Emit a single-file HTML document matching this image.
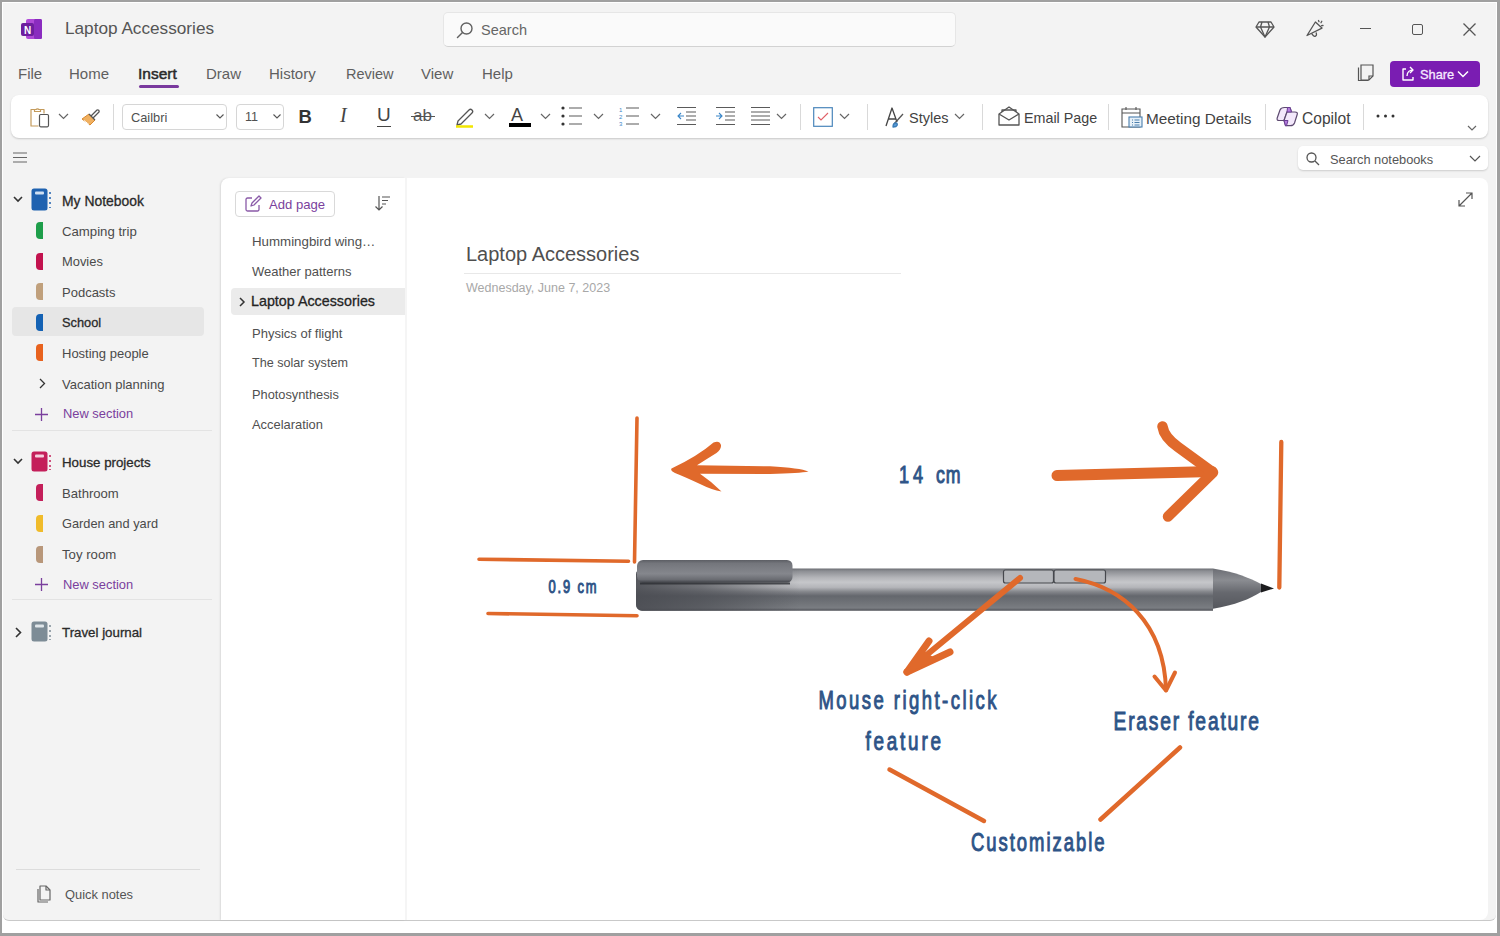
<!DOCTYPE html>
<html><head><meta charset="utf-8">
<style>
*{box-sizing:border-box;margin:0;padding:0}
html,body{width:1500px;height:936px;overflow:hidden;background:#fff}
body{position:relative;font-family:"Liberation Sans",sans-serif;color:#424242}
.a{position:absolute;white-space:nowrap}
#frame{position:absolute;left:0;top:0;width:1500px;height:936px;border-top:2px solid #a0a0a0;border-left:2px solid #a0a0a0;border-right:3px solid #a0a0a0;border-bottom:3px solid #a0a0a0;z-index:50;pointer-events:none}
#app{position:absolute;left:3px;top:3px;width:1493px;height:918px;background:#f3f3f3;border-bottom:1px solid #c9c9c9;border-radius:0 0 6px 6px}
.menu{font-size:15px;color:#5f5f5f;top:65px}
svg{position:absolute;overflow:visible}
.rib{position:absolute;left:11px;top:95px;width:1477px;height:43px;background:#fff;border-radius:8px;box-shadow:0 1px 2px rgba(0,0,0,0.18)}
.sep{position:absolute;width:1px;background:#d9d9d9;top:104px;height:26px}
.side{font-size:13px;color:#4a4a4a}
.pg{font-size:13px;color:#505050}
</style></head><body>
<div id="frame"></div>
<div id="app"></div>

<!-- Title bar -->
<svg style="left:20px;top:18px" width="24" height="22" viewBox="0 0 24 22">
  <rect x="6" y="1" width="16" height="20" rx="2" fill="#b04ad8"/>
  <rect x="14" y="1" width="8" height="20" rx="1.5" fill="#8a2bbf"/>
  <rect x="1" y="5" width="13" height="13" rx="2" fill="#6d1f9e"/>
  <text x="7.5" y="15.5" font-size="10" font-weight="bold" fill="#fff" text-anchor="middle" font-family="Liberation Sans">N</text>
</svg>
<div class="a" style="left:65px;top:18px;font-size:17.2px;color:#555">Laptop Accessories</div>

<div class="a" style="left:443px;top:12px;width:513px;height:35px;background:#fafafa;border:1px solid #e6e6e6;border-bottom-color:#d2d2d2;border-radius:5px"></div>
<svg style="left:456px;top:20.5px" width="18" height="18" viewBox="0 0 18 18"><circle cx="10.5" cy="7.5" r="5.5" fill="none" stroke="#616161" stroke-width="1.4"/><line x1="6.5" y1="11.5" x2="1.5" y2="16.5" stroke="#616161" stroke-width="1.5" stroke-linecap="round"/></svg>
<div class="a" style="left:481px;top:21.5px;font-size:14.5px;color:#666">Search</div>

<!-- window icons -->
<svg style="left:1255px;top:20px" width="20" height="18" viewBox="0 0 20 18" fill="none" stroke="#555" stroke-width="1.3" stroke-linejoin="round"><path d="M4 2h12l3 5-9 10L1 7z"/><path d="M1 7h18M7 2l-1.5 5L10 17l4.5-10L13 2"/></svg>
<svg style="left:1305px;top:19px" width="20" height="19" viewBox="0 0 20 19" fill="none" stroke="#555" stroke-width="1.3" stroke-linejoin="round" stroke-linecap="round"><path d="M2 16.5L10.4 3L17 9.1z"/><path d="M7 15l1.5 1.8a1.8 1.8 0 0 0 3-1.5l-0.3-1.5"/><path d="M13.5 1.5l0.5 1.2M16.8 2.3l-0.8 1.4M18 6.5l-1.4 0.2"/></svg>
<div class="a" style="left:1360px;top:28px;width:11px;height:1.3px;background:#555"></div>
<div class="a" style="left:1412px;top:24px;width:11px;height:11px;border:1.3px solid #555;border-radius:2px"></div>
<svg style="left:1463px;top:23px" width="13" height="13" viewBox="0 0 13 13" stroke="#555" stroke-width="1.3"><path d="M0.5 0.5l12 12M12.5 0.5l-12 12"/></svg>

<!-- Menu -->
<div class="a menu" style="left:18px">File</div>
<div class="a menu" style="left:69px">Home</div>
<div class="a menu" style="left:138px;color:#2a2a2a;font-size:15.5px;top:65px;-webkit-text-stroke:0.5px #2a2a2a">Insert</div>
<div class="a" style="left:139px;top:85px;width:40px;height:3px;background:#7a3a9e;border-radius:2px"></div>
<div class="a menu" style="left:206px">Draw</div>
<div class="a menu" style="left:269px">History</div>
<div class="a menu" style="left:346px;font-size:14.5px;top:66px">Review</div>
<div class="a menu" style="left:421px">View</div>
<div class="a menu" style="left:482px">Help</div>

<svg style="left:1357px;top:64px" width="18" height="18" viewBox="0 0 18 18" fill="none" stroke="#555" stroke-width="1.2"><path d="M4 1h12v11l-4 4H4z"/><path d="M12 16v-4h4"/><path d="M1.5 3.5v13h10"/></svg>
<div class="a" style="left:1390px;top:61px;width:90px;height:25.5px;background:#7a1db2;border-radius:4px"></div>
<svg style="left:1400px;top:66px" width="16" height="16" viewBox="0 0 16 16" fill="none" stroke="#fff" stroke-width="1.4" stroke-linejoin="round"><path d="M6 3H3v11h10v-3"/><path d="M7 10c0-4 3-6 6-6M10 1l3 3-3 3"/></svg>
<div class="a" style="left:1420px;top:67px;font-size:12.8px;color:#f6eaff;-webkit-text-stroke:0.3px #f6eaff">Share</div>
<svg style="left:1457px;top:70px" width="12" height="8" viewBox="0 0 12 8" fill="none" stroke="#fff" stroke-width="1.5"><path d="M1 1.5l5 5 5-5"/></svg>

<!-- Ribbon -->
<div class="rib"></div>

<!-- ribbon items -->
<svg style="left:29px;top:105px" width="22" height="23" viewBox="0 0 22 23" fill="none" stroke-width="1.2" stroke-linejoin="round">
  <path d="M9.5 21H2V4.5h3.5M11.5 4.5H15V8.5" stroke="#c49a5a"/><path d="M5.5 6.5V4.5h1.5a2 2 0 0 1 3 0h1.5v2z" stroke="#c49a5a"/>
  <rect x="10.5" y="9.5" width="9" height="12.3" rx="1.2" stroke="#555"/>
</svg>
<svg style="left:58px;top:113px" width="11" height="7" viewBox="0 0 11 7" fill="none" stroke="#666" stroke-width="1.2"><path d="M1 1l4.5 4.5L10 1"/></svg>
<svg style="left:81px;top:107px" width="21" height="18" viewBox="0 0 21 18" stroke-linejoin="round">
  <path d="M1 12l7-5 6 6-5 5z" fill="#f0b060" stroke="#d98a30" stroke-width="1"/>
  <path d="M3 13.5l5 4" stroke="#fff" stroke-width="1"/>
  <path d="M10 9l6-6a1.5 1.5 0 012 2l-6 6" fill="#fff" stroke="#555" stroke-width="1.3"/>
  <path d="M8 7l6 6" stroke="#555" stroke-width="1.3"/>
</svg>
<div class="sep" style="left:113px"></div>
<div class="a" style="left:122px;top:104px;width:105px;height:26px;border:1px solid #d6d6d6;border-radius:4px;background:#fff"></div>
<div class="a" style="left:131px;top:110px;font-size:12.8px;color:#505050">Cailbri</div>
<svg style="left:216px;top:114px" width="8" height="5" viewBox="0 0 8 5" fill="none" stroke="#555" stroke-width="1.1"><path d="M0.5 0.5l3.5 3.5 3.5-3.5"/></svg>
<div class="a" style="left:236px;top:104px;width:48px;height:26px;border:1px solid #d6d6d6;border-radius:4px;background:#fff"></div>
<div class="a" style="left:245px;top:110px;font-size:12.6px;color:#505050">11</div>
<svg style="left:273px;top:114px" width="8" height="5" viewBox="0 0 8 5" fill="none" stroke="#555" stroke-width="1.1"><path d="M0.5 0.5l3.5 3.5 3.5-3.5"/></svg>

<div class="a" style="left:298.5px;top:105.5px;font-size:18.5px;font-weight:bold;color:#333">B</div>
<div class="a" style="left:340px;top:104px;font-size:20px;font-family:'Liberation Serif',serif;font-style:italic;color:#444">I</div>
<div class="a" style="left:377px;top:104px;font-size:19px;color:#444">U</div>
<div class="a" style="left:377px;top:126px;width:14px;height:1.3px;background:#444"></div>
<div class="a" style="left:413px;top:106px;font-size:17px;color:#555">ab</div>
<div class="a" style="left:411px;top:116px;width:24px;height:1.3px;background:#555"></div>
<svg style="left:453px;top:106px" width="22" height="22" viewBox="0 0 22 22" fill="none" stroke="#555" stroke-width="1.3" stroke-linejoin="round">
  <path d="M5 15l11-11a2 2 0 013 3L8 18l-4 1z"/><path d="M3 20.5h17" stroke="#f2e600" stroke-width="2.5"/>
</svg>
<svg style="left:484px;top:113px" width="11" height="7" viewBox="0 0 11 7" fill="none" stroke="#666" stroke-width="1.2"><path d="M1 1l4.5 4.5L10 1"/></svg>
<div class="a" style="left:511px;top:104.5px;font-size:18px;color:#444">A</div>
<div class="a" style="left:509px;top:123px;width:22px;height:4px;background:#000"></div>
<svg style="left:540px;top:113px" width="11" height="7" viewBox="0 0 11 7" fill="none" stroke="#666" stroke-width="1.2"><path d="M1 1l4.5 4.5L10 1"/></svg>

<svg style="left:561px;top:106px" width="22" height="20" viewBox="0 0 22 20" stroke="#5a5a5a" stroke-width="1.1">
  <circle cx="2" cy="2" r="1.6" fill="#333" stroke="none"/><circle cx="2" cy="10" r="1.6" fill="#333" stroke="none"/><circle cx="2" cy="18" r="1.6" fill="#333" stroke="none"/>
  <path d="M8 2h13M8 10h13M8 18h13"/>
</svg>
<svg style="left:593px;top:113px" width="11" height="7" viewBox="0 0 11 7" fill="none" stroke="#666" stroke-width="1.2"><path d="M1 1l4.5 4.5L10 1"/></svg>
<svg style="left:619px;top:106px" width="22" height="20" viewBox="0 0 22 20" stroke="#5a5a5a" stroke-width="1.1">
  <text x="0" y="6" font-size="6" fill="#3a86c8" stroke="none" font-family="Liberation Sans">1</text>
  <text x="0" y="13" font-size="6" fill="#3a86c8" stroke="none" font-family="Liberation Sans">2</text>
  <text x="0" y="20" font-size="6" fill="#3a86c8" stroke="none" font-family="Liberation Sans">3</text>
  <path d="M7 2h13M7 10h13M7 18h13"/>
</svg>
<svg style="left:650px;top:113px" width="11" height="7" viewBox="0 0 11 7" fill="none" stroke="#666" stroke-width="1.2"><path d="M1 1l4.5 4.5L10 1"/></svg>
<svg style="left:676px;top:106px" width="21" height="20" viewBox="0 0 21 20" fill="none" stroke="#5a5a5a" stroke-width="1.1">
  <path d="M1 1.5h19M10 6h10M10 10h10M10 14h10M1 18.5h19"/><path d="M8 10H2M5 7l-3 3 3 3" stroke="#3a86c8"/>
</svg>
<svg style="left:715px;top:106px" width="21" height="20" viewBox="0 0 21 20" fill="none" stroke="#5a5a5a" stroke-width="1.1">
  <path d="M1 1.5h19M10 6h10M10 10h10M10 14h10M1 18.5h19"/><path d="M1 10h6M4 7l3 3-3 3" stroke="#3a86c8"/>
</svg>
<svg style="left:750px;top:106px" width="21" height="20" viewBox="0 0 21 20" fill="none" stroke="#5a5a5a" stroke-width="1.1">
  <path d="M1 1.5h19M1 6h19M1 10h19M1 14h19M1 18.5h19"/>
</svg>
<svg style="left:776px;top:113px" width="11" height="7" viewBox="0 0 11 7" fill="none" stroke="#666" stroke-width="1.2"><path d="M1 1l4.5 4.5L10 1"/></svg>
<div class="sep" style="left:800px"></div>
<svg style="left:813px;top:107px" width="20" height="20" viewBox="0 0 20 20" fill="none">
  <rect x="0.7" y="0.7" width="18.6" height="18.6" stroke="#4a86bb" stroke-width="1.2"/><path d="M5 10l3 3 7-7" stroke="#e06068" stroke-width="1.1"/>
</svg>
<svg style="left:839px;top:113px" width="11" height="7" viewBox="0 0 11 7" fill="none" stroke="#666" stroke-width="1.2"><path d="M1 1l4.5 4.5L10 1"/></svg>
<div class="sep" style="left:867px"></div>

<svg style="left:885px;top:107px" width="21" height="21" viewBox="0 0 21 21" fill="none" stroke="#444" stroke-width="1.3" stroke-linejoin="round">
  <path d="M1 19L7 1l5 14M3.5 12h7"/><path d="M9 17l9-10" stroke="#555"/><path d="M8 20c0-3 1.5-4 3-4s2 2 0 3.5z" fill="#5a9bd5" stroke="#3a7cb8"/>
</svg>
<div class="a" style="left:909px;top:110px;font-size:14.5px;color:#424242">Styles</div>
<svg style="left:954px;top:113px" width="11" height="7" viewBox="0 0 11 7" fill="none" stroke="#666" stroke-width="1.2"><path d="M1 1l4.5 4.5L10 1"/></svg>
<div class="sep" style="left:982px"></div>
<svg style="left:998px;top:106px" width="22" height="20" viewBox="0 0 22 20" fill="none" stroke="#555" stroke-width="1.3" stroke-linejoin="round">
  <path d="M1 8L11 1l10 7v11H1z"/><path d="M1 8l10 6 10-6"/><path d="M4 6V4h14v2"/>
</svg>
<div class="a" style="left:1024px;top:110px;font-size:14.3px;color:#424242">Email Page</div>
<div class="sep" style="left:1108px"></div>
<svg style="left:1121px;top:106px" width="22" height="22" viewBox="0 0 22 22" fill="none" stroke="#555" stroke-width="1.1">
  <path d="M1 3h18v18H1zM1 7h18M5 1v3M15 1v3"/>
  <rect x="8" y="11" width="13" height="10" fill="#e6f0f8" stroke="#4a7fae"/><path d="M11 14h1M13.5 14h5M11 16.5h1M13.5 16.5h5M11 19h1M13.5 19h5" stroke="#4a7fae" stroke-width="1"/>
</svg>
<div class="a" style="left:1146px;top:110px;font-size:15.3px;color:#424242">Meeting Details</div>
<div class="sep" style="left:1265px"></div>
<svg style="left:1276px;top:106px" width="23" height="21" viewBox="0 0 23 21" fill="none" stroke-linejoin="round">
  <path d="M8.5 1.5L14 1.5L15.5 6L11 6L8 14.5L3 14.5Q0.5 14.5 1.2 12L4 4Q5 1.5 8.5 1.5z" fill="#f3e8fb" stroke="#5d4a70" stroke-width="1.2"/>
  <path d="M11 6L19 6Q22 6 21.2 8.5L18.5 17Q17.5 19.7 14.5 19.7L9.5 19.7L8 14.5L11 6z" fill="#f3e8fb" stroke="#5d4a70" stroke-width="1.2"/>
  <path d="M11 6L15.5 6L14 1.5L11.5 1.5z" fill="#b77de0" stroke="#6a3d95" stroke-width="1"/>
  <path d="M8 14.5L12 14.5L10.5 19.7L9.5 19.7z" fill="#b77de0" stroke="#6a3d95" stroke-width="1"/>
</svg>
<div class="a" style="left:1302px;top:110px;font-size:15.6px;color:#424242">Copilot</div>
<div class="sep" style="left:1363px"></div>
<svg style="left:1376px;top:114px" width="20" height="4" viewBox="0 0 20 4" fill="#333"><circle cx="2" cy="2" r="1.5"/><circle cx="9.5" cy="2" r="1.5"/><circle cx="17" cy="2" r="1.5"/></svg>
<svg style="left:1467px;top:125px" width="10" height="6" viewBox="0 0 10 6" fill="none" stroke="#666" stroke-width="1.2"><path d="M1 1l4 4 4-4"/></svg>

<!-- hamburger + search notebooks -->
<svg style="left:13px;top:152px" width="15" height="11" viewBox="0 0 15 11" stroke="#666" stroke-width="1.2"><path d="M0 1h14M0 5.5h14M0 10h14"/></svg>
<div class="a" style="left:1298px;top:146px;width:190px;height:24px;background:#fff;border-radius:5px;box-shadow:0 1px 2px rgba(0,0,0,0.16)"></div>
<svg style="left:1306px;top:152px" width="14" height="13" viewBox="0 0 14 13" fill="none" stroke="#555" stroke-width="1.3"><circle cx="5.5" cy="5.5" r="4.5"/><path d="M9 9l4 4"/></svg>
<div class="a" style="left:1330px;top:152px;font-size:12.8px;color:#555">Search notebooks</div>
<svg style="left:1469px;top:155px" width="12" height="7" viewBox="0 0 12 7" fill="none" stroke="#555" stroke-width="1.2"><path d="M1 1l5 5 5-5"/></svg>

<!-- sidebar -->
<svg style="left:13px;top:196px" width="10" height="7" viewBox="0 0 10 7" fill="none" stroke="#333" stroke-width="1.6"><path d="M1 1l4 4 4-4"/></svg>
<svg style="left:31px;top:188px" width="21" height="23" viewBox="0 0 21 23">
  <rect x="0.5" y="0.5" width="16" height="22" rx="2.5" fill="#1f62b0"/><rect x="4" y="3.5" width="9" height="3" rx="1" fill="#cfe0f3"/>
  <path d="M19 4v2M19 9v2M19 14v2M19 19v1" stroke="#1f62b0" stroke-width="1.5"/>
</svg>
<div class="a side" style="left:62px;top:192.5px;color:#2a2a2a;font-size:13.9px;-webkit-text-stroke:0.3px #2a2a2a">My Notebook</div>

<div class="a" style="left:12px;top:307px;width:192px;height:29px;background:#e6e6e6;border-radius:4px"></div>
<div class="a" style="left:36px;top:222.0px;width:7px;height:17px;background:#1e9e4a;border-radius:4px 0 0 4px"></div>
<div class="a side" style="left:62px;top:223.5px;font-size:13.2px;">Camping trip</div>
<div class="a" style="left:36px;top:252.5px;width:7px;height:17px;background:#c2124e;border-radius:4px 0 0 4px"></div>
<div class="a side" style="left:62px;top:254.0px;font-size:12.9px;">Movies</div>
<div class="a" style="left:36px;top:283.0px;width:7px;height:17px;background:#c0a07c;border-radius:4px 0 0 4px"></div>
<div class="a side" style="left:62px;top:284.5px;font-size:13.0px;">Podcasts</div>
<div class="a" style="left:36px;top:313.5px;width:7px;height:17px;background:#1462b4;border-radius:4px 0 0 4px"></div>
<div class="a side" style="left:62px;top:315.0px;font-size:12.8px;color:#2a2a2a;-webkit-text-stroke:0.3px #2a2a2a">School</div>
<div class="a" style="left:36px;top:344.0px;width:7px;height:17px;background:#e8621e;border-radius:4px 0 0 4px"></div>
<div class="a side" style="left:62px;top:345.5px;font-size:13.0px;">Hosting people</div>

<svg style="left:39px;top:378px" width="7" height="11" viewBox="0 0 7 11" fill="none" stroke="#333" stroke-width="1.3"><path d="M1 1l4.5 4.5L1 10"/></svg>
<div class="a side" style="left:62px;top:376.5px;font-size:13px">Vacation planning</div>
<svg style="left:35px;top:408px" width="13" height="13" viewBox="0 0 13 13" stroke="#7a3f9d" stroke-width="1.3"><path d="M6.5 0v13M0 6.5h13"/></svg>
<div class="a side" style="left:63px;top:406px;font-size:12.9px;color:#7a3f9d">New section</div>
<div class="a" style="left:12px;top:430px;width:200px;height:1px;background:#e3e3e3"></div>

<svg style="left:13px;top:458px" width="10" height="7" viewBox="0 0 10 7" fill="none" stroke="#333" stroke-width="1.6"><path d="M1 1l4 4 4-4"/></svg>
<svg style="left:31px;top:451px" width="21" height="21" viewBox="0 0 21 21">
  <rect x="0.5" y="0.5" width="16" height="20" rx="2.5" fill="#c41f5a"/><rect x="4" y="3.5" width="9" height="3" rx="1" fill="#f5d0de"/>
  <path d="M19 4v2M19 9v2M19 14v2M19 18v1" stroke="#c41f5a" stroke-width="1.5"/>
</svg>
<div class="a side" style="left:62px;top:454.5px;color:#2a2a2a;font-size:13.3px;-webkit-text-stroke:0.3px #2a2a2a">House projects</div>
<div class="a" style="left:36px;top:484.0px;width:7px;height:17px;background:#c41f5a;border-radius:4px 0 0 4px"></div>
<div class="a side" style="left:62px;top:485.5px;font-size:13.1px">Bathroom</div>
<div class="a" style="left:36px;top:514.5px;width:7px;height:17px;background:#f0bb2a;border-radius:4px 0 0 4px"></div>
<div class="a side" style="left:62px;top:516.0px;font-size:12.8px">Garden and yard</div>
<div class="a" style="left:36px;top:545.5px;width:7px;height:17px;background:#b8977a;border-radius:4px 0 0 4px"></div>
<div class="a side" style="left:62px;top:547.0px;font-size:13.2px">Toy room</div>

<svg style="left:35px;top:578px" width="13" height="13" viewBox="0 0 13 13" stroke="#7a3f9d" stroke-width="1.3"><path d="M6.5 0v13M0 6.5h13"/></svg>
<div class="a side" style="left:63px;top:576.5px;font-size:12.9px;color:#7a3f9d">New section</div>
<div class="a" style="left:12px;top:599px;width:200px;height:1px;background:#e3e3e3"></div>

<svg style="left:15px;top:627px" width="7" height="11" viewBox="0 0 7 11" fill="none" stroke="#333" stroke-width="1.6"><path d="M1 1l4.5 4.5L1 10"/></svg>
<svg style="left:31px;top:621px" width="21" height="21" viewBox="0 0 21 21">
  <rect x="0.5" y="0.5" width="16" height="20" rx="2.5" fill="#7d8c96"/><rect x="4" y="3.5" width="9" height="3" rx="1" fill="#e0e6ea"/>
  <path d="M19 4v2M19 9v2M19 14v2M19 18v1" stroke="#7d8c96" stroke-width="1.5"/>
</svg>
<div class="a side" style="left:62px;top:624.5px;color:#2a2a2a;font-size:13.3px;-webkit-text-stroke:0.3px #2a2a2a">Travel journal</div>

<div class="a" style="left:16px;top:869px;width:184px;height:1px;background:#dcdcdc"></div>
<svg style="left:36px;top:885px" width="16" height="19" viewBox="0 0 16 19" fill="none" stroke="#666" stroke-width="1.2" stroke-linejoin="round"><path d="M4 1h6l4 4v10H4z"/><path d="M10 1v4h4"/><path d="M2 4v13h10"/></svg>
<div class="a side" style="left:65px;top:887px;font-size:12.9px;color:#555">Quick notes</div>

<!-- page list panel -->
<div class="a" style="left:221px;top:178px;width:184px;height:742px;background:#fff;border-radius:8px 0 0 0;box-shadow:-1px 0 2px rgba(0,0,0,0.10)"></div>
<div class="a" style="left:405px;top:178px;width:2px;height:742px;background:#f5f5f5"></div>
<div class="a" style="left:235px;top:191px;width:100px;height:26px;border:1px solid #d9d9d9;border-radius:4px;background:#fff"></div>
<svg style="left:245px;top:196px" width="16" height="16" viewBox="0 0 16 16" fill="none" stroke="#8a5aa8" stroke-width="1.3" stroke-linejoin="round"><path d="M7 2H2.5a1.5 1.5 0 00-1.5 1.5v10A1.5 1.5 0 002.5 15h10a1.5 1.5 0 001.5-1.5V9"/><path d="M6 10l1-3 7-7 2 2-7 7z"/></svg>
<div class="a" style="left:269px;top:196.5px;font-size:13.1px;color:#7a3f9d">Add page</div>
<svg style="left:374px;top:195px" width="17" height="17" viewBox="0 0 17 17" fill="none" stroke="#555" stroke-width="1.2"><path d="M5 1v14M1.5 11.5L5 15l3.5-3.5M8 2h8M8 5.5h6M8 9h4"/></svg>
<div class="a pg" style="left:252px;top:234.0px;font-size:13.3px">Hummingbird wing…</div>
<div class="a pg" style="left:252px;top:264.3px;font-size:13.0px">Weather patterns</div>
<div class="a pg" style="left:252px;top:325.9px;font-size:13.0px">Physics of flight</div>
<div class="a pg" style="left:252px;top:356.1px;font-size:12.6px">The solar system</div>
<div class="a pg" style="left:252px;top:386.6px;font-size:12.8px">Photosynthesis</div>
<div class="a pg" style="left:252px;top:417.0px;font-size:12.9px">Accelaration</div>

<div class="a" style="left:231px;top:288px;width:174px;height:27px;background:#ebebeb;border-radius:4px 0 0 4px"></div>
<svg style="left:239px;top:297px" width="6" height="10" viewBox="0 0 6 10" fill="none" stroke="#333" stroke-width="1.5"><path d="M1 1l4 4-4 4"/></svg>
<div class="a" style="left:251px;top:292.5px;font-size:14.3px;color:#242424;-webkit-text-stroke:0.3px #242424">Laptop Accessories</div>

<!-- canvas -->
<div class="a" style="left:407px;top:178px;width:1081px;height:742px;background:#fff;border-radius:0 8px 8px 0"></div>
<svg style="left:1458px;top:192px" width="15" height="15" viewBox="0 0 15 15" fill="none" stroke="#555" stroke-width="1.2"><path d="M1 14L14 1M8 1h6v6M1 8v6h6"/></svg>
<div class="a" style="left:466px;top:243px;font-size:20px;color:#4f4f4f">Laptop Accessories</div>
<div class="a" style="left:464px;top:273px;width:437px;height:1px;background:#e8e8e8"></div>
<div class="a" style="left:466px;top:281px;font-size:12.5px;color:#a8a8a8">Wednesday, June 7, 2023</div>

<!-- drawing -->
<svg style="left:0;top:0" width="1500" height="936" viewBox="0 0 1500 936">
<defs>
  <linearGradient id="body" x1="0" y1="568" x2="0" y2="611" gradientUnits="userSpaceOnUse">
    <stop offset="0" stop-color="#66686e"/>
    <stop offset="0.07" stop-color="#8c8e93"/>
    <stop offset="0.22" stop-color="#b3b4b8"/>
    <stop offset="0.33" stop-color="#c6c7ca"/>
    <stop offset="0.45" stop-color="#b4b5b9"/>
    <stop offset="0.55" stop-color="#85878c"/>
    <stop offset="0.65" stop-color="#64676d"/>
    <stop offset="0.8" stop-color="#6f7277"/>
    <stop offset="0.93" stop-color="#7a7d82"/>
    <stop offset="1" stop-color="#4a4c52"/>
  </linearGradient>
  <linearGradient id="shade" x1="636" y1="0" x2="800" y2="0" gradientUnits="userSpaceOnUse">
    <stop offset="0" stop-color="#4a4c52" stop-opacity="0.9"/>
    <stop offset="0.4" stop-color="#4a4c52" stop-opacity="0.65"/>
    <stop offset="1" stop-color="#44464c" stop-opacity="0"/>
  </linearGradient>
  <linearGradient id="clip" x1="0" y1="560" x2="0" y2="583" gradientUnits="userSpaceOnUse">
    <stop offset="0" stop-color="#5c5e64"/>
    <stop offset="0.15" stop-color="#74767c"/>
    <stop offset="0.6" stop-color="#85878d"/>
    <stop offset="0.85" stop-color="#6a6c72"/>
    <stop offset="1" stop-color="#3a3c42"/>
  </linearGradient>
  <linearGradient id="cone" x1="0" y1="568" x2="0" y2="609" gradientUnits="userSpaceOnUse">
    <stop offset="0" stop-color="#6a6c72"/>
    <stop offset="0.3" stop-color="#8a8c91"/>
    <stop offset="0.6" stop-color="#66686e"/>
    <stop offset="1" stop-color="#55575d"/>
  </linearGradient>
</defs>
<!-- pen -->
<path d="M642 568.5H1213V610.8H642a6 6 0 0 1-6-6V574.5a6 6 0 0 1 6-6z" fill="url(#body)"/>
<path d="M642 568.5H800V610.8H642a6 6 0 0 1-6-6V574.5a6 6 0 0 1 6-6z" fill="url(#shade)"/>
<path d="M1213 568.5C1235 572 1250 578 1261 584V592C1250 599 1235 605 1213 608.8z" fill="url(#cone)"/>
<path d="M1261 583.5L1274 588.5L1261 592.5z" fill="#1c1c1e"/>
<path d="M643 560H787a5.5 5.5 0 0 1 5.5 5.5V577a5.5 5.5 0 0 1-5.5 5.5H643a6 6 0 0 1-6-6v-10.5a6 6 0 0 1 6-6z" fill="url(#clip)"/>
<path d="M640 583.5H790" stroke="#2c2e33" stroke-width="2" opacity="0.8"/>
<rect x="1003.5" y="570" width="50" height="13" rx="2" fill="#b5b7bb" stroke="#46484d" stroke-width="1.2"/>
<rect x="1054" y="570" width="51.5" height="13" rx="2" fill="#b5b7bb" stroke="#46484d" stroke-width="1.2"/>

<g stroke="#e0692b" fill="none" stroke-linecap="round" stroke-linejoin="round">
  <!-- dimension lines -->
  <path d="M637 418L634.5 562" stroke-width="3.6"/>
  <path d="M479 559.2L628.5 561.2" stroke-width="3.6"/>
  <path d="M488 613.5L637 615.8" stroke-width="3.6"/>
  <path d="M1281.3 442L1279.3 587.5" stroke-width="4.3"/>
  <!-- left arrow -->

  <!-- right arrow -->
  <path d="M1057 475.5L1212 471.5" stroke-width="11"/>
  <path d="M1162.5 426.5Q1164 437 1178 447L1213 472.5L1168 516.5" stroke-width="10.5"/>
  <!-- mouse arrow -->
  <path d="M1020 578L912 667" stroke-width="6"/>
  <path d="M907 672L929 641" stroke-width="7"/>
  <path d="M907 672L950 652" stroke-width="7"/>
  <!-- eraser arc -->
  <path d="M1075.5 579C1122 588 1164 622 1166 690" stroke-width="4"/>
  <path d="M1154.5 676.5L1166 690.5L1175 672.5" stroke-width="4"/>
  <!-- customizable lines -->
  <path d="M889.5 769.5L984 821" stroke-width="4.5"/>
  <path d="M1100.5 819.5L1180 747.5" stroke-width="4.5"/>
</g>
<path d="M671.5 468.5Q698 456 713.5 442.5Q719.5 440 721 445Q721.5 449 716.5 453Q706 459.5 697 465.2L770 466.3Q800 468 808.5 471.6Q800 473.5 770 474L700 473.8Q712 482 721.5 491.5Q712 490 700 484Q685 477 675 473Q670 470.5 671.5 468.5z" fill="#e0692b"/>
<path d="M905 674L922 650L938 660z" fill="#e0692b"/>

<g fill="#2e5487" stroke="#2e5487" stroke-width="1.0" font-family="Liberation Sans">
  <text transform="translate(899 482.5) scale(0.74 1)" x="0" y="0" font-size="24.5" textLength="32.4" lengthAdjust="spacing">14</text>
  <text transform="translate(936 482.5) scale(0.74 1)" x="0" y="0" font-size="24" textLength="33.1" lengthAdjust="spacing">cm</text>
  <text transform="translate(548.5 592.5) scale(0.74 1)" x="0" y="0" font-size="17.5" textLength="64.9" lengthAdjust="spacing">0.9 cm</text>
  <text transform="translate(818.5 708.8) scale(0.74 1)" x="0" y="0" font-size="25" textLength="240.5" lengthAdjust="spacing">Mouse right-click</text>
  <text transform="translate(865.5 749.5) scale(0.74 1)" x="0" y="0" font-size="25.5" textLength="102.0" lengthAdjust="spacing">feature</text>
  <text transform="translate(1113.5 729.8) scale(0.74 1)" x="0" y="0" font-size="26" textLength="196.6" lengthAdjust="spacing">Eraser feature</text>
  <text transform="translate(971 850.5) scale(0.74 1)" x="0" y="0" font-size="25" textLength="180.4" lengthAdjust="spacing">Customizable</text>
</g>
</svg>
</body></html>
